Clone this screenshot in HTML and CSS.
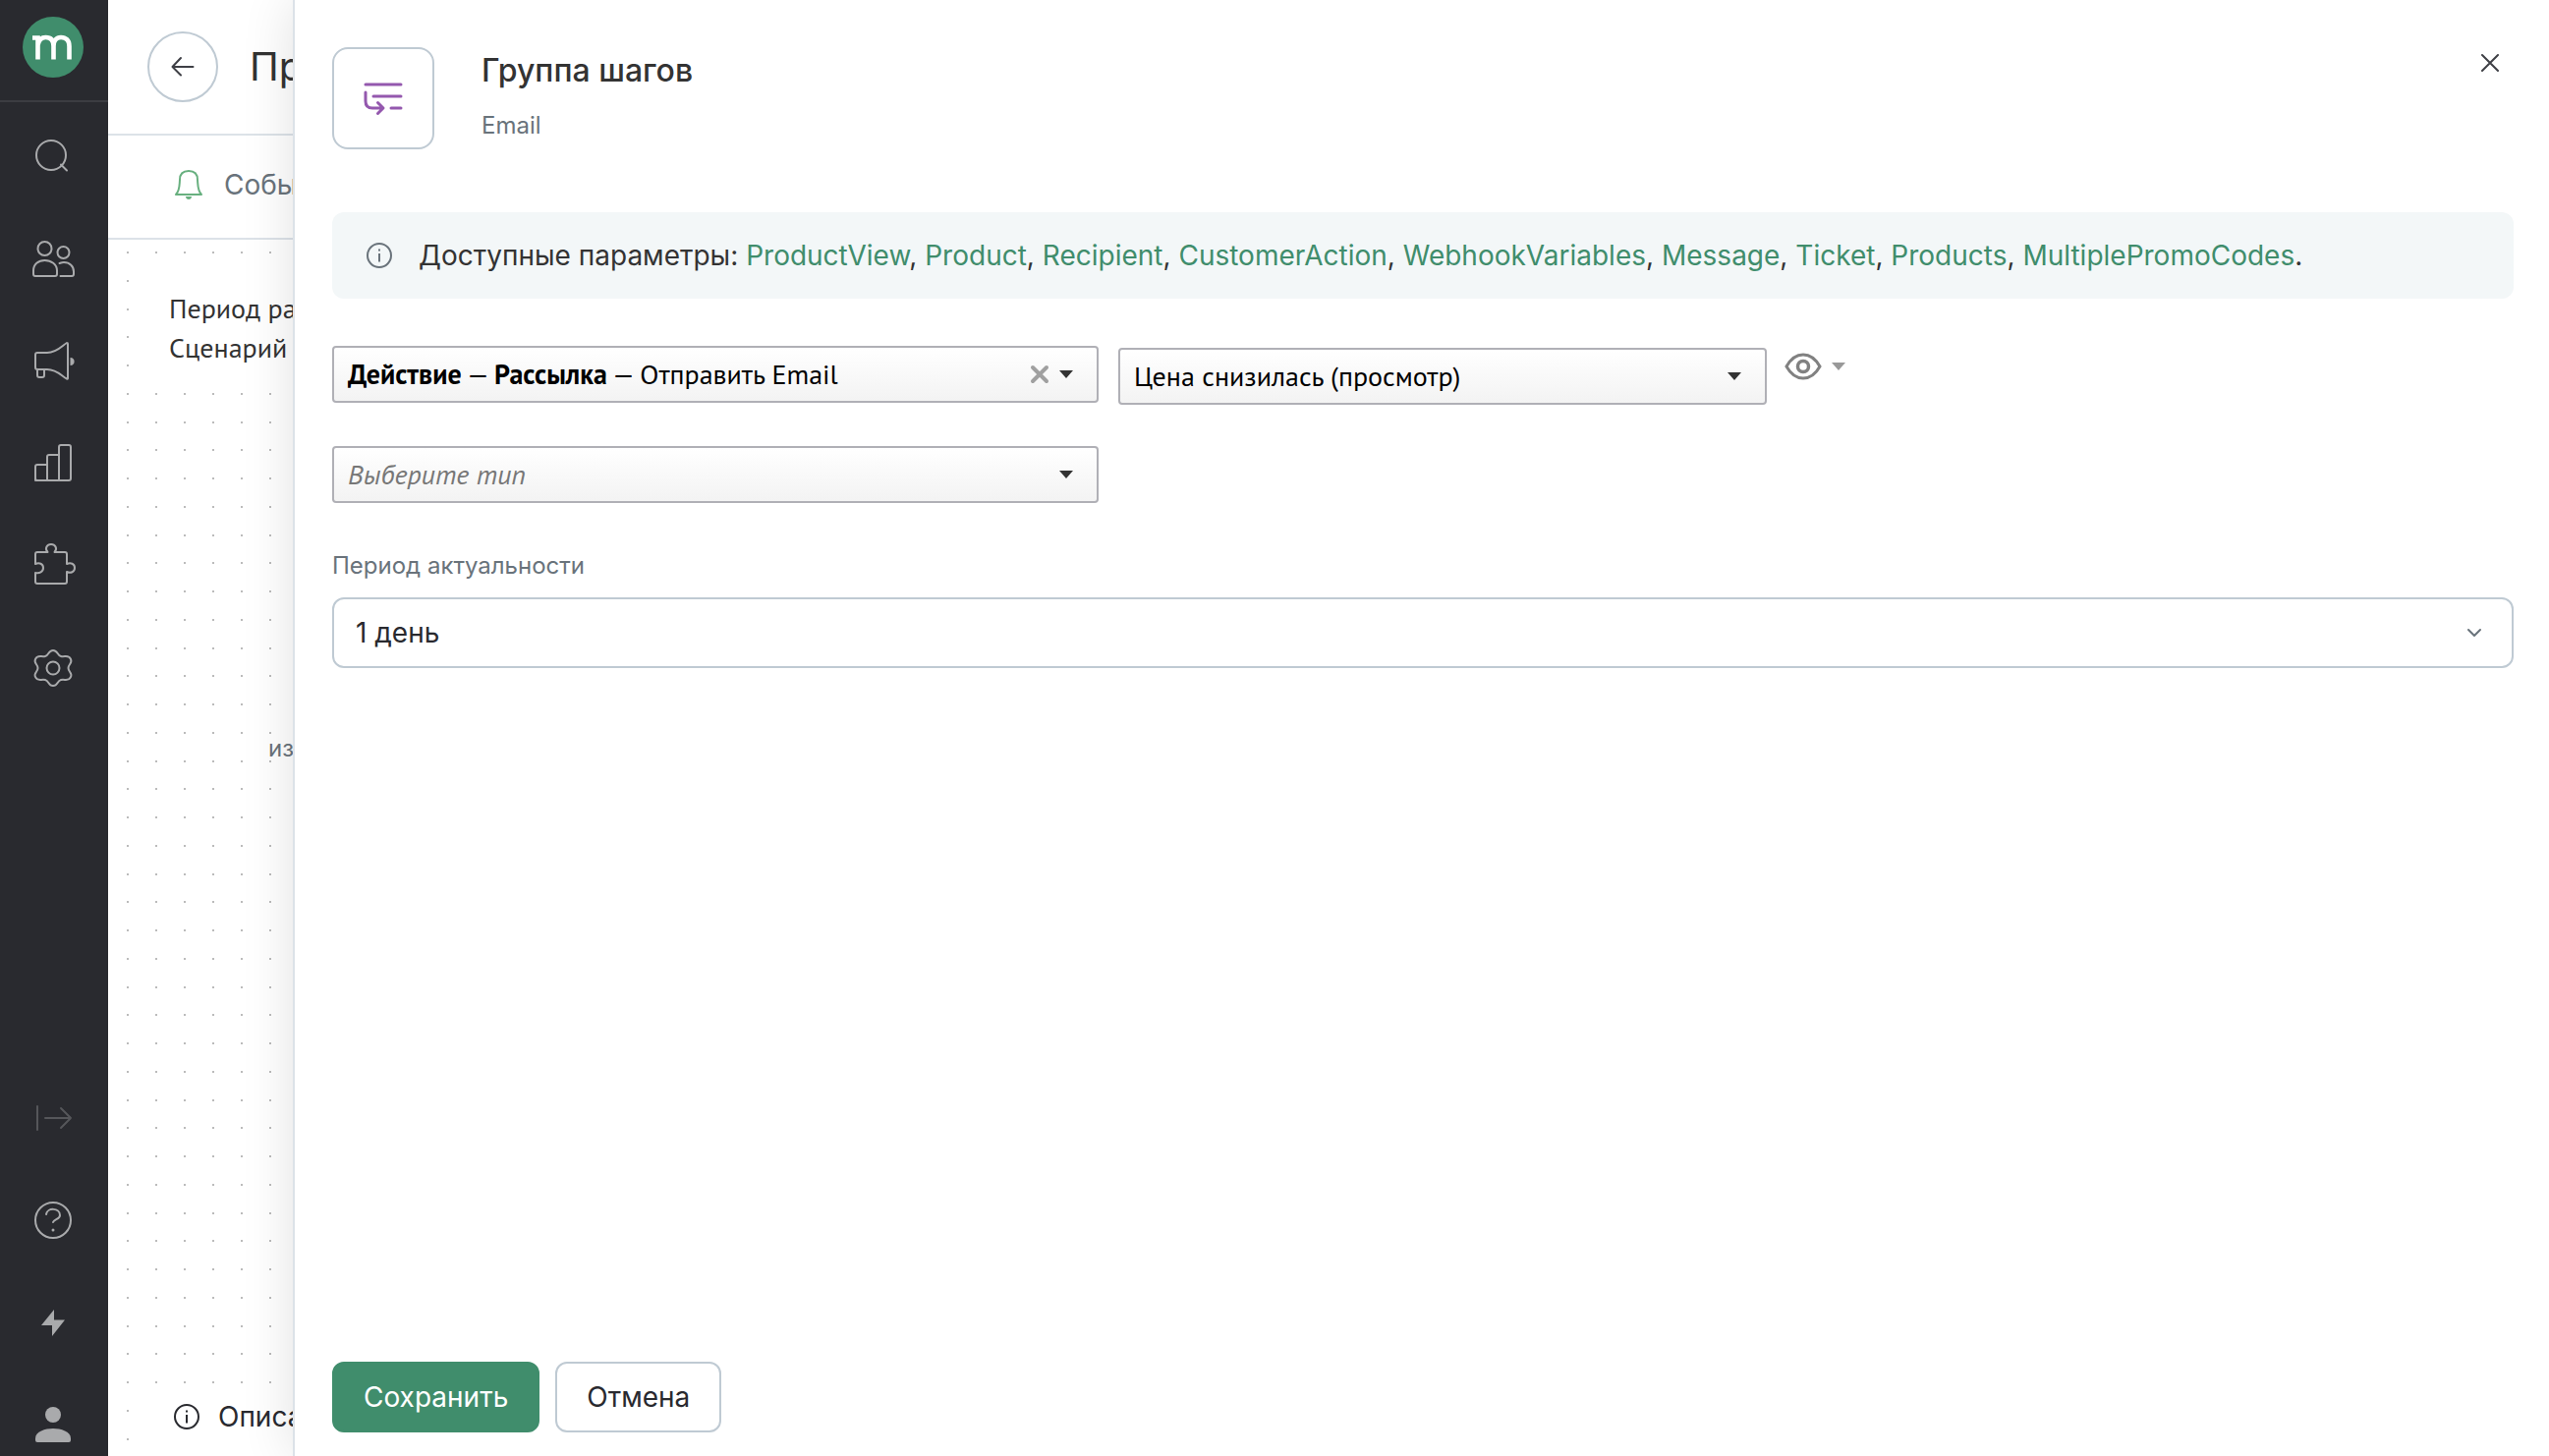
FILE: index.html
```html
<!DOCTYPE html>
<html lang="ru">
<head>
<meta charset="utf-8">
<meta name="viewport" content="width=device-width, initial-scale=1">
<title>Группа шагов</title>
<link rel="stylesheet" href="styles.css">
</head>
<body>
<div class="app">
  <nav class="sidebar" aria-label="Главное меню">
    <a class="logo" href="#" aria-label="Главная">
      <svg width="62" height="62" viewBox="0 0 62 62"><circle cx="31" cy="31" r="31" fill="#408d6c"/><path d="M10 21.500H15.500V43.500M15.500 29C16.500 23.500 19 21 23.500 21C28.500 21 31.500 24 31.500 30V43.500M31.500 30C31.500 24 34.500 21 39 21C44 21 47.500 24 47.500 30V43.500" fill="none" stroke="#fff" stroke-width="4.600"/></svg>
    </a>
    <ul class="menu">
      <li><a href="#" aria-label="Поиск"><svg class="ico" viewBox="0 0 48 48"><circle cx="22" cy="22" r="15"/><path d="M32 31.500L38 37.500"/></svg></a></li>
      <li><a href="#" aria-label="Клиенты"><svg class="ico" viewBox="0 -2 48 48"><circle cx="15.500" cy="11" r="7"/><circle cx="34.500" cy="15" r="6"/><path d="M4 37V33.500C4 27 9 23 15.500 23S28 27 28 33.500V37Q28 39 26 39H6Q4 39 4 37ZM30.500 26C32 25.500 33 25 35 25C41 25 45 29 45 34.500V37Q45 39 43 39H31.500"/></svg></a></li>
      <li><a href="#" aria-label="Кампании"><svg class="ico" viewBox="0 -1 48 48"><path d="M8 14H18C28 14 33 7 38 4Q39 4 39 5V40Q39 41 38 40.500C33 38 28 31 18 31H8Q6 31 6 29V16Q6 14 8 14ZM8 31V37Q8 39 10 39H13Q15 39 15 37V31"/><path class="solid" d="M41.500 19C47 19 47 27 41.500 27Z"/></svg></a></li>
      <li><a href="#" aria-label="Отчёты"><svg class="ico" viewBox="0 0 48 48"><path d="M6 41V27Q6 25 8 25H18V17Q18 15 20 15H30V7Q30 5 32 5H40Q42 5 42 7V39Q42 41 40 41H8Q6 41 6 39M18 25V41M30 15V41"/></svg></a></li>
      <li><a href="#" aria-label="Интеграции"><svg class="ico" viewBox="0 -3 48 48"><path d="M6 18V9Q6 7 8 7H18.500C15 3 18 -1 22 -1S29 3 25.500 7H36Q38 7 38 9V19C42 17 46 19 46 23S42 29 38 27V37Q38 39 36 39H8Q6 39 6 37V28C10 29 14 27 14 23S10 17 6 19Z"/></svg></a></li>
      <li><a href="#" aria-label="Настройки"><svg class="ico" viewBox="0 0 48 48"><circle cx="24" cy="24" r="6.500"/><path d="M24 6C29 6 28 11 32 12C36 13 40 10 42 15C44 19 39.500 20 39.500 24S44 29 42 33C40 38 36 35 32 36S29 42 24 42S20 37 16 36S8 38 6 33C4 29 8.500 28 8.500 24S4 19 6 15C8 10 12 13 16 12S19 6 24 6Z"/></svg></a></li>
    </ul>
    <ul class="menu menu-bottom">
      <li><a class="dim" href="#" aria-label="Развернуть меню"><svg class="ico" viewBox="0 0 48 48"><path d="M8 12V36M16 24H42M32 14L42 24L32 34"/></svg></a></li>
      <li><a href="#" aria-label="Помощь"><svg class="ico" viewBox="0 0 48 48"><circle cx="24" cy="24" r="18"/><path d="M17 18C18 11 31 11 31 19C31 23 25 23 24 26"/><circle class="solid" cx="24" cy="34" r="1.500"/></svg></a></li>
      <li><a href="#" aria-label="Быстрые действия"><svg class="ico" viewBox="0 0 48 48"><path class="solid" d="M25 11L12 27H23L23 38L36 21.500H25Z"/></svg></a></li>
      <li><a href="#" aria-label="Профиль"><svg class="ico" viewBox="0 0 48 48"><circle class="solid" cx="24" cy="14" r="8"/><path class="solid" d="M6 40V38C6 31 16 28 24 28S42 31 42 38V40Q42 42 40 42H8Q6 42 6 40Z"/></svg></a></li>
    </ul>
  </nav>

  <main class="page">
    <header class="page-head">
      <a class="back" href="#" aria-label="Назад"><svg width="24" height="24" viewBox="0 0 24 24"><path d="M22.500 12H2M10 3L1.500 12L10 20.500" fill="none" stroke="#3f4046" stroke-width="2" stroke-linecap="round" stroke-linejoin="round"/></svg></a>
      <h1>Пр</h1>
    </header>
    <div class="event-bar">
      <svg width="32" height="32" viewBox="0 0 32 32"><path d="M3 26H29C25 22 25.500 17 25 11C25 4 21 2 16 2S7 4 7 11C6.500 17 7 22 3 26Z" fill="none" stroke="#68b07f" stroke-width="2" stroke-linejoin="round"/><path d="M13 28H19C19 32 13 32 13 28Z" fill="#68b07f"/></svg>
      <span>Собы</span>
    </div>
    <section class="canvas">
      <div class="scenario"><p>Период ра</p><p>Сценарий</p></div>
      <span class="node-label">из</span>
      <div class="description"><svg width="28" height="28" viewBox="0 0 28 28" fill="none" stroke="currentColor" stroke-width="2"><circle cx="14" cy="14" r="12"/><path d="M14 12V20.500M14 7.500V9.500"/></svg><span>Описа</span></div>
    </section>
  </main>

  <section class="drawer" role="dialog" aria-labelledby="drawer-title">
    <header class="drawer-head">
      <span class="step-icon"><svg width="48" height="48" viewBox="0 0 48 48" fill="none" stroke="#9458ae" stroke-width="3" stroke-linecap="round" stroke-linejoin="round"><path d="M6 10H42M14 22H42M32 34H42M6 18V27Q6 34 13 34H23M18.500 28.500L24 34L18.500 39.500"/></svg></span>
      <div class="titles"><h2 id="drawer-title">Группа шагов</h2><p>Email</p></div>
      <button class="close" type="button" aria-label="Закрыть"><svg width="20" height="20" viewBox="0 0 20 20"><path d="M2 2L18 18M18 2L2 18" stroke="#3f4046" stroke-width="2" stroke-linecap="round"/></svg></button>
    </header>

    <div class="note">
      <svg width="28" height="28" viewBox="0 0 28 28" fill="none" stroke="#69737b" stroke-width="2"><circle cx="14" cy="14" r="12"/><path d="M14 12V20.500M14 7.500V9.500"/></svg>
      <p>Доступные параметры: <a href="#">ProductView</a>, <a href="#">Product</a>, <a href="#">Recipient</a>, <a href="#">CustomerAction</a>, <a href="#">WebhookVariables</a>, <a href="#">Message</a>, <a href="#">Ticket</a>, <a href="#">Products</a>, <a href="#">MultiplePromoCodes</a>.</p>
    </div>

    <form class="form" id="step-form">
      <div class="row">
        <div class="combo combo-wide">
          <button class="combo-value" type="button" aria-haspopup="listbox"><b>Действие</b> — <b>Рассылка</b> — Отправить Email</button>
          <button class="clear" type="button" aria-label="Очистить"><svg width="20" height="20" viewBox="0 0 20 20"><path d="M3 3L17 17M17 3L3 17" stroke="#a0a0a0" stroke-width="4" stroke-linecap="round"/></svg></button>
          <svg class="caret" width="14" height="8" viewBox="0 0 14 8"><path d="M0 0H14L7 8Z"/></svg>
        </div>
        <div class="combo combo-mail">
          <select aria-label="Рассылка"><option>Цена снизилась (просмотр)</option></select>
          <svg class="caret" width="14" height="8" viewBox="0 0 14 8"><path d="M0 0H14L7 8Z"/></svg>
        </div>
        <button class="preview" type="button" aria-label="Просмотр"><svg width="38" height="28" viewBox="0 0 38 28" fill="none" stroke="#818181" stroke-width="3"><path d="M2 14C11 -2 27 -2 36 14C27 30 11 30 2 14Z"/><circle cx="19" cy="14" r="5.500" stroke-width="3.500"/></svg><svg width="14" height="8" viewBox="0 0 14 8"><path d="M0 0H14L7 8Z" fill="#999"/></svg></button>
      </div>
      <div class="row">
        <div class="combo combo-wide">
          <select class="empty" aria-label="Тип"><option>Выберите тип</option></select>
          <svg class="caret" width="14" height="8" viewBox="0 0 14 8"><path d="M0 0H14L7 8Z"/></svg>
        </div>
      </div>
      <label class="field-label" for="period">Период актуальности</label>
      <div class="field">
        <select id="period"><option>1 день</option></select>
        <svg width="16" height="10" viewBox="0 0 16 10"><path d="M2 2L8 8L14 2" fill="none" stroke="#69737b" stroke-width="2" stroke-linecap="round" stroke-linejoin="round"/></svg>
      </div>
    </form>

    <footer class="actions">
      <button class="btn btn-primary" type="submit" form="step-form">Сохранить</button>
      <button class="btn" type="button">Отмена</button>
    </footer>
  </section>
</div>
</body>
</html>
```
FILE: styles.css
```css
* { box-sizing: border-box; }

body {
  margin: 0;
  background: #fff;
  color: #333;
  font-family: Inter, "Liberation Sans", sans-serif;
  font-size: 28px;
  line-height: 40px;
}

h1, h2, p, ul { margin: 0; padding: 0; font-weight: 400; }
ul { list-style: none; }
svg { display: block; flex: none; }
a { color: inherit; text-decoration: none; }
button, select { font: inherit; color: inherit; margin: 0; padding: 0; border: 0; background: none; cursor: pointer; }

.app {
  display: grid;
  grid-template-columns: 110px 188px 1fr;
  height: 100vh;
  overflow: hidden;
}

/* Sidebar */
.sidebar {
  display: flex;
  flex-direction: column;
  background: #292a2f;
  color: #a9aaac;
}
.logo {
  height: 104px;
  padding: 17px 0 0 23px;
  border-bottom: 2px solid #3c3d42;
}
.menu { padding-top: 4px; }
.menu li { height: 104px; }
.menu a { display: flex; align-items: center; justify-content: center; height: 104px; padding-right: 2px; }
.menu-bottom { margin-top: auto; margin-bottom: -20px; }
.ico { width: 48px; height: 48px; overflow: visible; fill: none; stroke: currentColor; stroke-width: 2; stroke-linecap: round; stroke-linejoin: round; }
.solid { fill: currentColor; stroke: none; }
.menu .dim { color: #55565a; }

/* Page under the drawer */
.page {
  display: flex;
  flex-direction: column;
  min-width: 0;
  overflow: hidden;
  white-space: nowrap;
}
.page-head {
  display: flex;
  align-items: center;
  gap: 32px;
  height: 138px;
  padding-left: 40px;
  border-bottom: 2px solid #dce2e8;
}
.back {
  display: flex;
  flex: none;
  align-items: center;
  justify-content: center;
  width: 72px;
  height: 72px;
  border: 2px solid #bfcad3;
  border-radius: 50%;
}
h1 { font-size: 40px; line-height: 48px; }
.event-bar {
  display: flex;
  align-items: center;
  gap: 20px;
  height: 106px;
  padding: 0 0 4px 66px;
  border-bottom: 2px solid #dce2e8;
  color: #69737b;
}
/* Dot grid: one tile holds four rows of dots */
.canvas {
  --dot: radial-gradient(circle at 20px 13px, #bbb 1px, transparent 1px);
  display: flex;
  flex: 1;
  flex-direction: column;
  align-items: flex-start;
  padding-bottom: 12px;
  background-image: var(--dot), var(--dot), var(--dot), var(--dot);
  background-size: 29px 115px;
  background-position: 0 0, 0 29px, 0 58px, 0 86px;
}
.scenario {
  margin: 30px 0 0 46px;
  padding: 20px 16px;
  background: #fff;
  font-family: "PT Sans", "Noto Sans", sans-serif;
}
.node-label { margin: 348px 0 0 163px; font-size: 24px; color: #69737b; }
.description {
  display: flex;
  align-items: center;
  gap: 18px;
  margin: auto 0 0 48px;
  padding: 8px 18px;
  background: #fff;
  color: #292a2f;
}

/* Drawer */
.drawer {
  display: flex;
  flex-direction: column;
  min-width: 0;
  padding: 48px 36px 24px 38px;
  border-left: 2px solid #dce2e8;
  background: #fff;
  box-shadow: 0 0 50px rgba(0, 0, 0, 0.12);
}
.drawer-head { display: flex; align-items: flex-start; gap: 48px; }
.step-icon {
  display: flex;
  align-items: center;
  justify-content: center;
  width: 104px;
  height: 104px;
  border: 2px solid #bfcad3;
  border-radius: 16px;
}
.titles { flex: 1; padding-top: 4px; }
h2 { font-size: 32px; font-weight: 500; }
.titles p { margin-top: 16px; font-size: 24px; color: #69737b; }
.close { padding: 6px 14px; }

.note {
  display: flex;
  align-items: center;
  gap: 26px;
  min-height: 88px;
  margin-top: 64px;
  padding: 0 34px;
  border-radius: 12px;
  background: #f3f7f8;
}
.note a { color: #408d6c; }

.form { display: flex; flex-direction: column; margin-top: 48px; }
.row { display: flex; gap: 20px; margin-bottom: 44px; }
.combo {
  display: flex;
  align-items: center;
  position: relative;
  height: 58px;
  border: 2px solid #b0b0b6;
  border-radius: 4px;
  background: linear-gradient(#fff, #f3f3f3);
  font-family: "PT Sans", "Noto Sans", sans-serif;
  color: #000;
}
.combo-wide { width: 780px; }
.combo-mail { width: 660px; margin-top: 2px; margin-bottom: -2px; }
.combo-value { flex: 1; padding-left: 14px; text-align: left; }
.clear { margin-right: 48px; }
.combo select { width: 100%; height: 100%; padding-left: 14px; appearance: none; }
.combo .empty { color: #777; font-style: italic; }
.caret { position: absolute; right: 24px; fill: #333; pointer-events: none; }
.preview { display: flex; align-items: center; align-self: flex-start; gap: 10px; margin-left: -2px; padding-top: 7px; }

.field-label { font-size: 24px; color: #69737b; }
.field {
  display: flex;
  align-items: center;
  position: relative;
  height: 72px;
  margin-top: 12px;
  border: 2px solid #bfcad3;
  border-radius: 12px;
  color: #292a2f;
}
.field select { width: 100%; height: 100%; padding-left: 22px; appearance: none; }
.field svg { position: absolute; right: 30px; pointer-events: none; }

.actions { display: flex; gap: 16px; margin-top: auto; }
.btn {
  height: 72px;
  padding: 0 30px;
  border: 2px solid #bfcad3;
  border-radius: 12px;
  color: #292a2f;
}
.btn-primary { border-color: #408d6c; background: #408d6c; color: #fff; }
```
